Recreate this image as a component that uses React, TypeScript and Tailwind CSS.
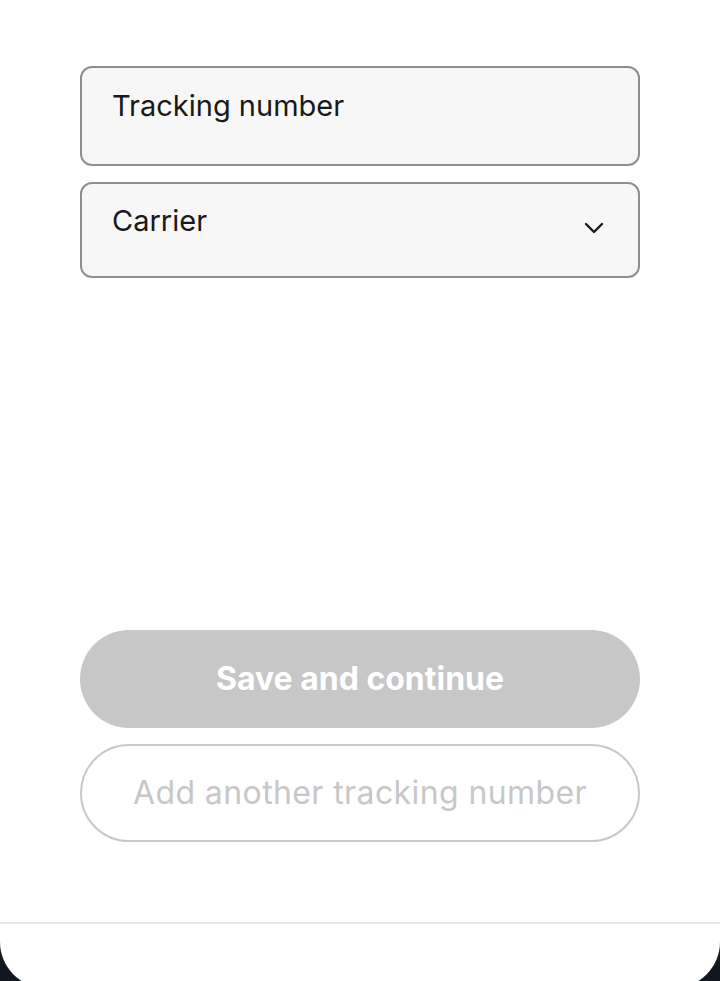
import React from 'react';

const font = { fontFamily: 'Inter, "Noto Sans", sans-serif' };

export default function App() {
  return (
    <div className="h-[981px] overflow-hidden bg-[#111820]" style={font}>
      <div className="flex h-[988px] flex-col bg-white rounded-b-[46px]">
        <div className="flex flex-col gap-4 px-20 pt-[66px]">
          <label className="flex h-[100px] items-start rounded-xl border-2 border-[#8f8f8f] bg-[#f7f7f7] px-[30px] pt-[20px]">
            <span className="text-[29px] leading-9 text-[#191919]">Tracking number</span>
          </label>
          <div className="flex h-[96px] items-start justify-between rounded-xl border-2 border-[#8f8f8f] bg-[#f7f7f7] pl-[30px] pr-[34px] pt-[19px]">
            <span className="text-[29px] leading-9 text-[#191919]">Carrier</span>
            <svg className="mt-[19px]" width="20" height="12" viewBox="0 0 20 12" fill="none">
              <path d="M2 2l8 8 8-8" stroke="#191919" strokeWidth="2.4" strokeLinecap="round" strokeLinejoin="round" />
            </svg>
          </div>
        </div>

        <div className="mt-[352px] flex flex-col gap-4 px-20">
          <button className="h-[98px] rounded-full bg-[#c7c7c7] text-[32px] font-bold text-white">
            Save and continue
          </button>
          <button className="h-[98px] rounded-full border-2 border-[#c7c7c7] bg-white text-[32px] tracking-[0.4px] text-[#c7c7c7]">
            Add another tracking number
          </button>
        </div>

        <div className="mt-[80px] h-[2px] bg-[#e5e5e5]" />
      </div>
    </div>
  );
}
